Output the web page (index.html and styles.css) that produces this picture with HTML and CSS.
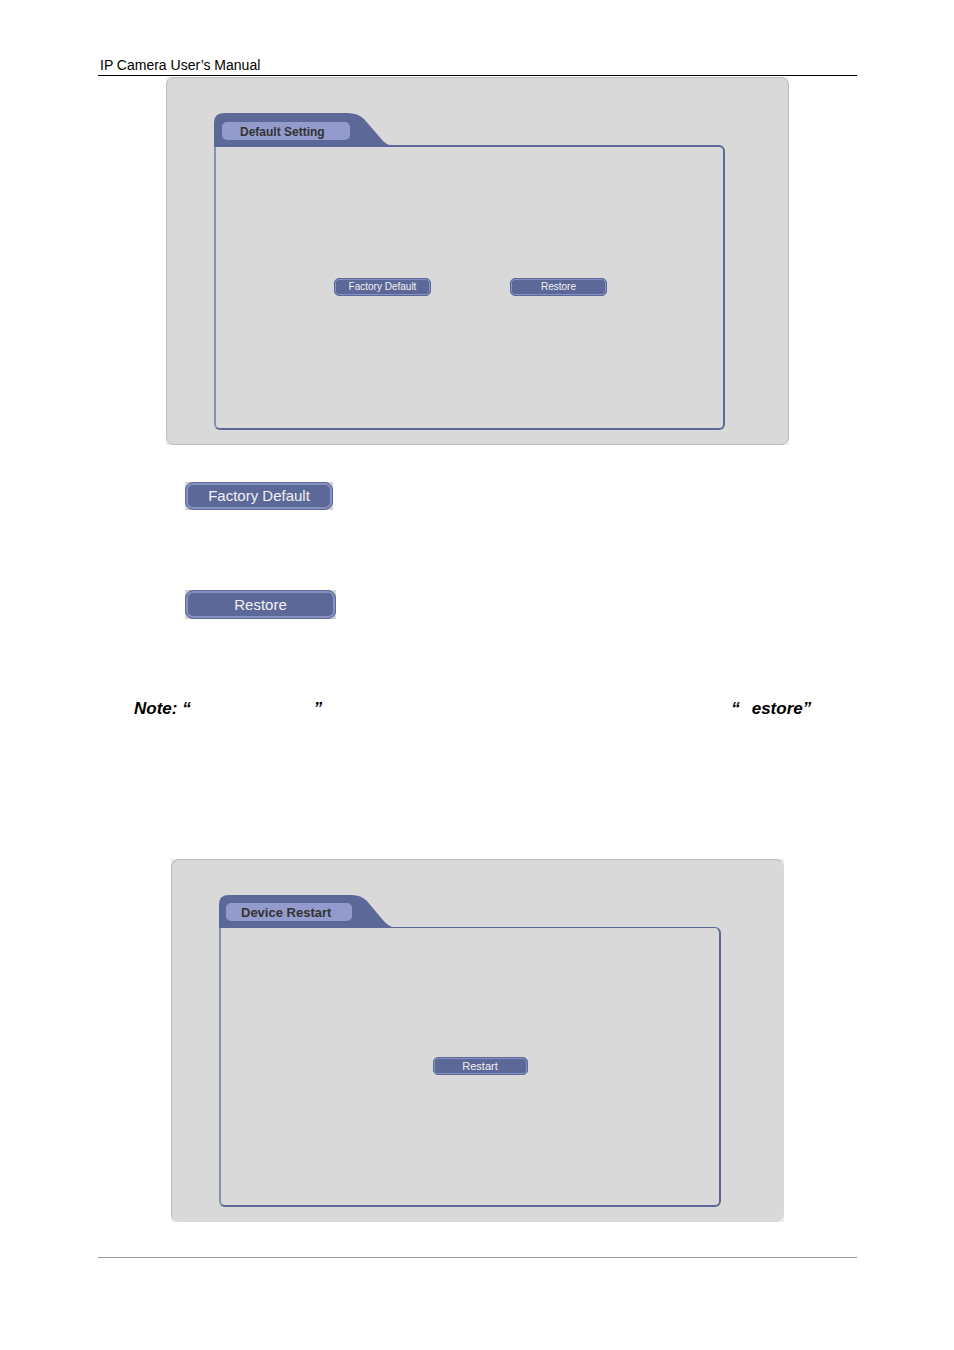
FILE: index.html
```html
<!DOCTYPE html>
<html lang="en">
<head>
<meta charset="utf-8">
<title>IP Camera User’s Manual</title>
<link rel="stylesheet" href="styles.css">
</head>
<body>
<div class="page">
  <header class="page-header">IP Camera User’s Manual</header>
  <main>
    <section class="figure figure-default">
      <div class="panel">
        <div class="tab">
          <svg class="tab-shape" viewBox="0 0 177 34" aria-hidden="true"><path d="M0 34V9Q0 0 11 0H133Q144 0 150 6L169 28Q173 32 177 32.5V34Z" fill="#5c6898"/></svg>
          <h2 class="tab-label">Default Setting</h2>
        </div>
        <div class="frame">
          <button class="btn" type="button">Factory Default</button>
          <button class="btn" type="button">Restore</button>
        </div>
      </div>
    </section>
    <div class="samples">
      <span class="plate"><button class="btn btn-large" type="button">Factory Default</button></span>
      <span class="plate plate-wide"><button class="btn btn-large" type="button">Restore</button></span>
    </div>
    <p class="note"><span>Note: “</span><span class="blank blank-name"></span><span>”</span><span class="blank blank-text"></span><span>“</span><span class="blank blank-letter"></span><span>estore”</span></p>
    <section class="figure figure-restart">
      <div class="panel">
        <div class="tab">
          <svg class="tab-shape" viewBox="0 0 173 33" aria-hidden="true"><path d="M0 33V9Q0 0 10 0H133Q142 0 148 6L163 24Q168 30 173 32V33Z" fill="#5c6898"/></svg>
          <h2 class="tab-label">Device Restart</h2>
        </div>
        <div class="frame">
          <button class="btn" type="button">Restart</button>
        </div>
      </div>
    </section>
  </main>
  <footer class="page-footer"></footer>
</div>
</body>
</html>
```
FILE: styles.css
```css
* { box-sizing: border-box; }

body {
  margin: 0;
  background: #fff;
  color: #000;
  font-family: "Liberation Sans", Arial, sans-serif;
}

.page { padding: 56px 97px 92px 98px; }

.page-header {
  padding: 0 2px 1px;
  border-bottom: 1px solid #000;
  font-size: 14px;
  line-height: 18px;
}

.figure {
  margin: 0 auto;
  background: #eee;
}

.figure-default { max-width: 623px; margin-top: 1px; }
.figure-restart { max-width: 613px; }

.panel {
  padding: 35px 63px 14px 47px;
  border: 1px solid #bbb;
  border-radius: 8px;
  background: #d9d9d9;
}

.figure-restart .panel {
  padding-right: 62px;
  border-right-color: #d9d9d9;
  border-bottom-color: #d9d9d9;
}

.tab {
  position: relative;
  width: 177px;
  height: 32px;
  padding: 9px 0 0 8px;
}

.figure-restart .tab { width: 173px; padding: 8px 0 0 7px; }

.tab-shape {
  position: absolute;
  top: 0;
  left: 0;
  width: 100%;
}

.tab-label {
  position: relative;
  width: 128px;
  height: 18px;
  margin: 0;
  padding-left: 18px;
  border-radius: 5px;
  background: #929bcc;
  color: #333;
  font-size: 12px;
  line-height: 21px;
}

.figure-restart .tab-label { width: 126px; padding-left: 15px; font-size: 13px; line-height: 19px; }

.frame {
  display: flex;
  justify-content: center;
  align-items: center;
  gap: 79px;
  height: 285px;
  padding: 0 0 2px 2px;
  border: 2px solid #5c6898;
  border-left-color: #8791b4;
  border-radius: 0 6px 6px 6px;
}

.figure-restart .frame {
  height: 280px;
  padding-left: 20px;
  border-width: 1px 2px 2px;
}

.btn {
  width: 97px;
  height: 18px;
  padding: 0;
  border: 1px solid #5c6898;
  border-radius: 5px;
  background: #5c6898;
  box-shadow: inset 0 0 0 1px #8791c4;
  color: #f2f2f2;
  font-family: inherit;
  font-size: 10px;
  line-height: 14px;
}

.figure-restart .btn { width: 95px; font-size: 11px; }

.samples {
  display: flex;
  flex-direction: column;
  align-items: flex-start;
  gap: 80px;
  padding: 37px 0 0 87px;
}

.plate {
  display: flex;
  width: 148px;
  background: #d4d4d4;
}

.plate-wide { width: 151px; }

.btn-large {
  width: 100%;
  height: 28px;
  border-radius: 8px;
  box-shadow: inset 0 0 0 2px #8791c4;
  font-size: 15px;
  line-height: 26px;
}

.plate-wide .btn-large { height: 29px; }

.note {
  display: flex;
  margin: 80px 0 140px;
  padding-left: 36px;
  font-size: 17px;
  font-style: italic;
  font-weight: bold;
  line-height: 20px;
  white-space: nowrap;
}

.blank-name { width: 123px; }
.blank-text { width: 409px; }
.blank-letter { width: 12px; }

.page-footer {
  margin-top: 35px;
  border-top: 1px solid #999;
}
```
